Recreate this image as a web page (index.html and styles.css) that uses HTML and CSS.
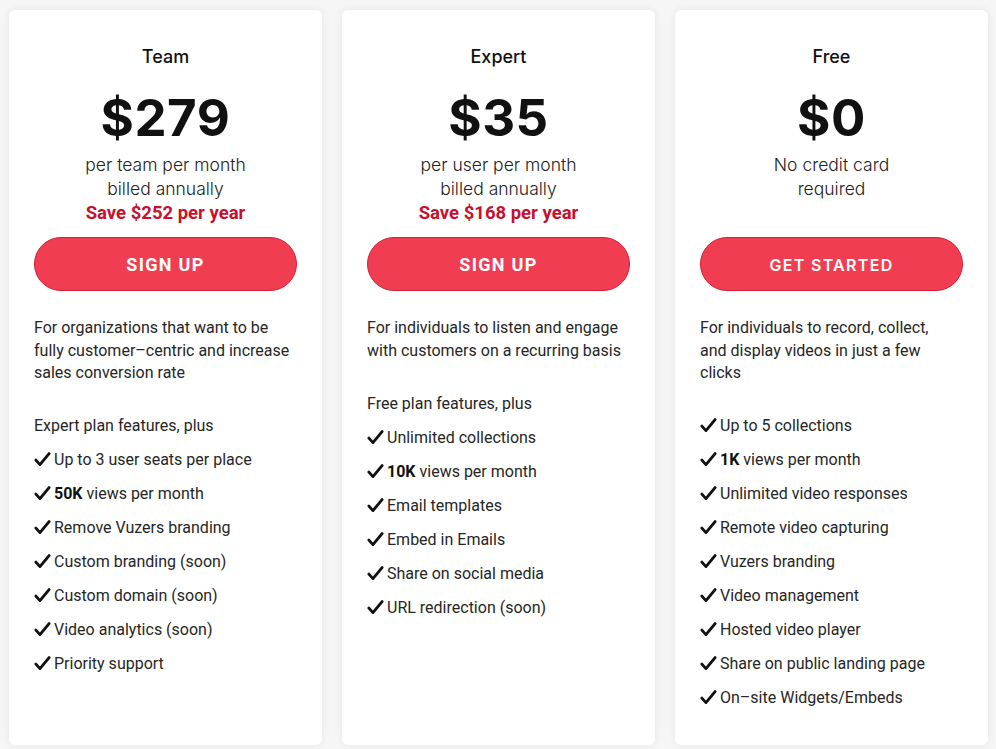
FILE: index.html
```html
<!DOCTYPE html>
<html lang="en">
<head>
<meta charset="utf-8">
<title>Pricing</title>
<link rel="stylesheet" href="styles.css">
</head>
<body>
<main class="plans">
  <section class="card">
    <h2 class="plan-name">Team</h2>
    <div class="price">$279</div>
    <div class="sub">
      <p>per team per month</p>
      <p>billed annually</p>
      <p class="save">Save $252 per year</p>
    </div>
    <a class="btn" href="#">SIGN UP</a>
    <p class="desc">For organizations that want to be fully customer–centric and increase sales conversion rate</p>
    <ul class="features">
      <li class="lead">Expert plan features, plus</li>
      <li><svg class="check" viewBox="0 0 16 16"><path d="M1.8 8.6 L5.6 12.8 L14.2 2.4"/></svg>Up to 3 user seats per place</li>
      <li><svg class="check" viewBox="0 0 16 16"><path d="M1.8 8.6 L5.6 12.8 L14.2 2.4"/></svg><b>50K</b>&nbsp;views per month</li>
      <li><svg class="check" viewBox="0 0 16 16"><path d="M1.8 8.6 L5.6 12.8 L14.2 2.4"/></svg>Remove Vuzers branding</li>
      <li><svg class="check" viewBox="0 0 16 16"><path d="M1.8 8.6 L5.6 12.8 L14.2 2.4"/></svg>Custom branding (soon)</li>
      <li><svg class="check" viewBox="0 0 16 16"><path d="M1.8 8.6 L5.6 12.8 L14.2 2.4"/></svg>Custom domain (soon)</li>
      <li><svg class="check" viewBox="0 0 16 16"><path d="M1.8 8.6 L5.6 12.8 L14.2 2.4"/></svg>Video analytics (soon)</li>
      <li><svg class="check" viewBox="0 0 16 16"><path d="M1.8 8.6 L5.6 12.8 L14.2 2.4"/></svg>Priority support</li>
    </ul>
  </section>

  <section class="card">
    <h2 class="plan-name">Expert</h2>
    <div class="price">$35</div>
    <div class="sub">
      <p>per user per month</p>
      <p>billed annually</p>
      <p class="save">Save $168 per year</p>
    </div>
    <a class="btn" href="#">SIGN UP</a>
    <p class="desc">For individuals to listen and engage with customers on a recurring basis</p>
    <ul class="features">
      <li class="lead">Free plan features, plus</li>
      <li><svg class="check" viewBox="0 0 16 16"><path d="M1.8 8.6 L5.6 12.8 L14.2 2.4"/></svg>Unlimited collections</li>
      <li><svg class="check" viewBox="0 0 16 16"><path d="M1.8 8.6 L5.6 12.8 L14.2 2.4"/></svg><b>10K</b>&nbsp;views per month</li>
      <li><svg class="check" viewBox="0 0 16 16"><path d="M1.8 8.6 L5.6 12.8 L14.2 2.4"/></svg>Email templates</li>
      <li><svg class="check" viewBox="0 0 16 16"><path d="M1.8 8.6 L5.6 12.8 L14.2 2.4"/></svg>Embed in Emails</li>
      <li><svg class="check" viewBox="0 0 16 16"><path d="M1.8 8.6 L5.6 12.8 L14.2 2.4"/></svg>Share on social media</li>
      <li><svg class="check" viewBox="0 0 16 16"><path d="M1.8 8.6 L5.6 12.8 L14.2 2.4"/></svg>URL redirection (soon)</li>
    </ul>
  </section>

  <section class="card">
    <h2 class="plan-name">Free</h2>
    <div class="price">$0</div>
    <div class="sub">
      <p>No credit card</p>
      <p>required</p>
    </div>
    <a class="btn btn-start" href="#">GET STARTED</a>
    <p class="desc">For individuals to record, collect, and display videos in just a few clicks</p>
    <ul class="features">
      <li><svg class="check" viewBox="0 0 16 16"><path d="M1.8 8.6 L5.6 12.8 L14.2 2.4"/></svg>Up to 5 collections</li>
      <li><svg class="check" viewBox="0 0 16 16"><path d="M1.8 8.6 L5.6 12.8 L14.2 2.4"/></svg><b>1K</b>&nbsp;views per month</li>
      <li><svg class="check" viewBox="0 0 16 16"><path d="M1.8 8.6 L5.6 12.8 L14.2 2.4"/></svg>Unlimited video responses</li>
      <li><svg class="check" viewBox="0 0 16 16"><path d="M1.8 8.6 L5.6 12.8 L14.2 2.4"/></svg>Remote video capturing</li>
      <li><svg class="check" viewBox="0 0 16 16"><path d="M1.8 8.6 L5.6 12.8 L14.2 2.4"/></svg>Vuzers branding</li>
      <li><svg class="check" viewBox="0 0 16 16"><path d="M1.8 8.6 L5.6 12.8 L14.2 2.4"/></svg>Video management</li>
      <li><svg class="check" viewBox="0 0 16 16"><path d="M1.8 8.6 L5.6 12.8 L14.2 2.4"/></svg>Hosted video player</li>
      <li><svg class="check" viewBox="0 0 16 16"><path d="M1.8 8.6 L5.6 12.8 L14.2 2.4"/></svg>Share on public landing page</li>
      <li><svg class="check" viewBox="0 0 16 16"><path d="M1.8 8.6 L5.6 12.8 L14.2 2.4"/></svg>On–site Widgets/Embeds</li>
    </ul>
  </section>
</main>
</body>
</html>
```

FILE: styles.css
```css
* { box-sizing: border-box; }

html, body {
  margin: 0;
  padding: 0;
  background: #f6f6f6;
}

body {
  font-family: Roboto, "Liberation Sans", sans-serif;
  color: #222;
}

.plans {
  display: grid;
  grid-template-columns: 313px 313px 313px;
  column-gap: 20px;
  padding: 10px 0 4px 9px;
  height: 749px;
}

.card {
  background: #fff;
  border-radius: 6px;
  box-shadow: 0 0 10px rgba(0, 0, 0, 0.07);
  padding: 35px 25px 0;
  display: flex;
  flex-direction: column;
}

.plan-name {
  margin: 0;
  text-align: center;
  font-family: Inter, Roboto, sans-serif;
  font-weight: 500;
  font-size: 18px;
  line-height: 24px;
  color: #111;
}

.price {
  margin-top: 21px;
  text-align: center;
  font-family: Inter, Roboto, sans-serif;
  font-weight: 700;
  font-size: 51px;
  line-height: 56px;
  color: #111;
  letter-spacing: 0.5px;
}

.sub {
  margin-top: 7px;
  min-height: 72px;
  text-align: center;
}

.sub p {
  margin: 0;
  font-family: Inter, Roboto, sans-serif;
  font-weight: 300;
  font-size: 17.5px;
  line-height: 24px;
  color: #222;
}

.sub p.save {
  font-family: Roboto, sans-serif;
  font-weight: 700;
  font-size: 18.5px;
  color: #c8102e;
}

.btn {
  margin-top: 12px;
  display: flex;
  align-items: center;
  justify-content: center;
  height: 54px;
  border-radius: 27px;
  background: #f03d51;
  border: 1px solid #d41f36;
  color: #fff;
  text-decoration: none;
  font-family: Roboto, sans-serif;
  font-weight: 700;
  font-size: 18px;
  letter-spacing: 1.3px;
}

.btn-start {
  font-family: Inter, Roboto, sans-serif;
  font-weight: 600;
  font-size: 16px;
  letter-spacing: 1.3px;
  padding-top: 2px;
}

.desc {
  margin: 26px 0 0;
  padding-right: 5px;
  font-size: 16px;
  line-height: 22.5px;
  color: #262626;
}

.features {
  list-style: none;
  margin: 24px 0 0;
  padding: 0;
}

.features li {
  display: flex;
  align-items: center;
  height: 34px;
  font-size: 16px;
  color: #262626;
}

.features li b {
  font-weight: 700;
  color: #111;
}

.check {
  width: 17px;
  height: 17px;
  margin-right: 3px;
  flex: none;
}

.check path {
  fill: none;
  stroke: #111;
  stroke-width: 2.7;
  stroke-linecap: round;
  stroke-linejoin: round;
}
```
